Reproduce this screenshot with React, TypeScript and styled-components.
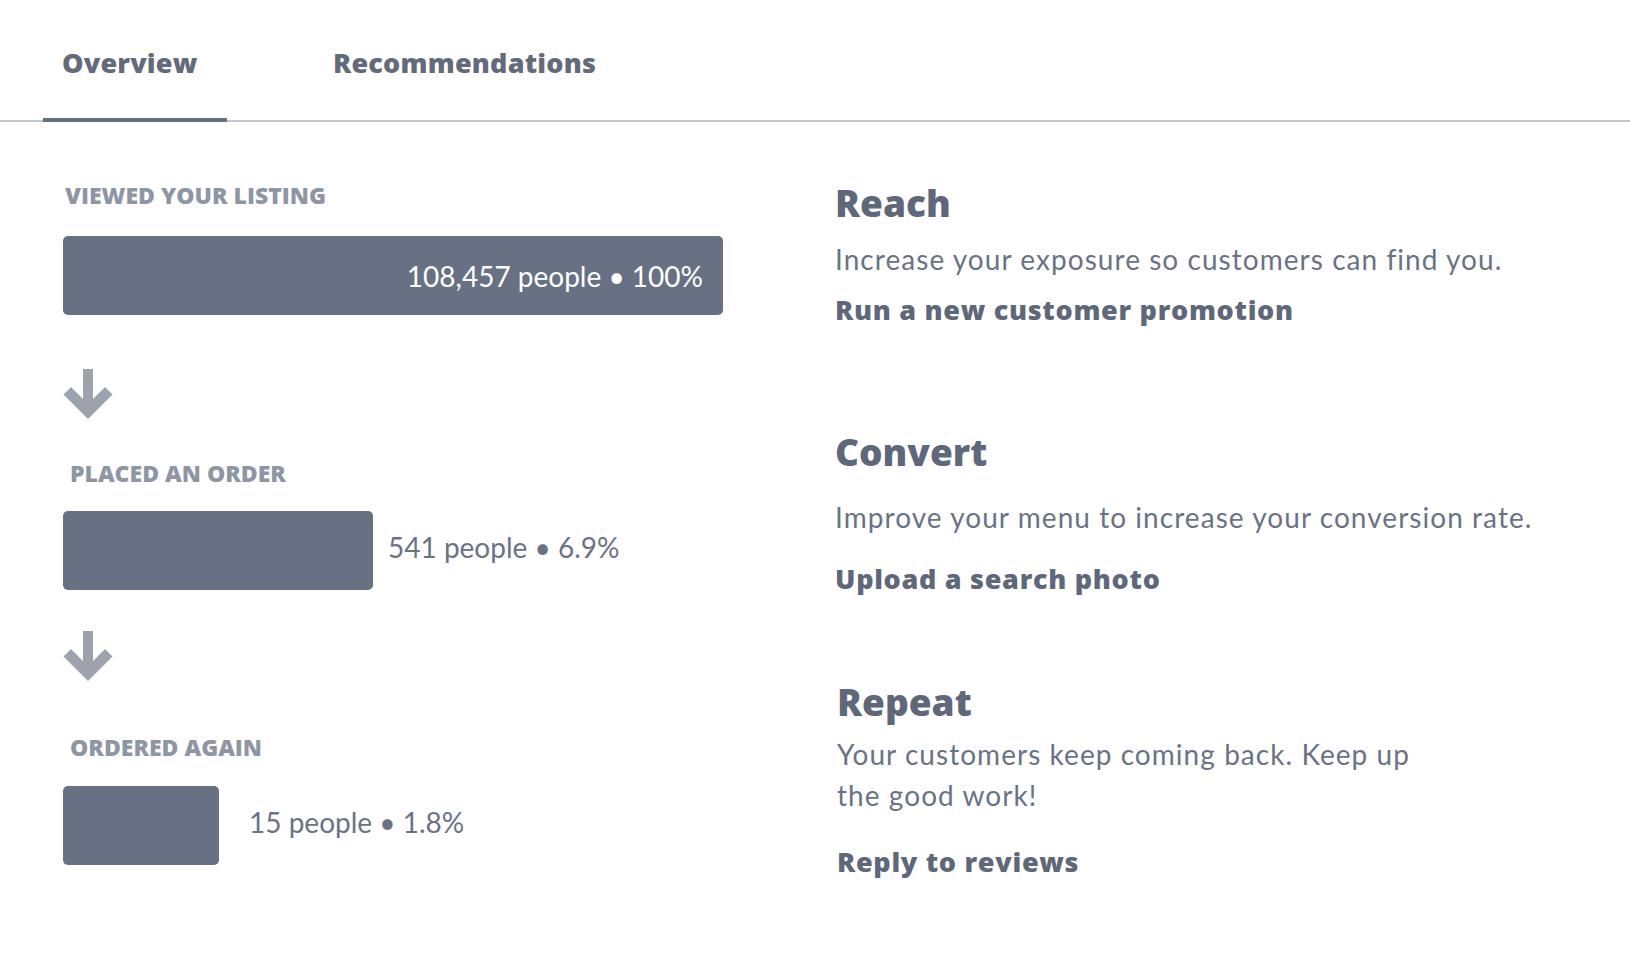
import React from "react";
import styled, { createGlobalStyle } from "styled-components";

const GlobalStyle = createGlobalStyle`
  html, body { margin: 0; padding: 0; background: #ffffff; }
  body { font-family: Lato, "Open Sans", sans-serif; -webkit-font-smoothing: antialiased; }
  * { box-sizing: border-box; }
`;

const heavy = `"Open Sans", Lato, sans-serif`;

const Page = styled.div`
  width: 1630px;
  min-height: 966px;
  background: #ffffff;
`;

const TabBar = styled.nav`
  display: flex;
  align-items: flex-end;
  gap: 87px;
  height: 122px;
  padding-left: 43px;
  border-bottom: 2px solid #c5c8cd;
`;

const Tab = styled.div<{ $active?: boolean }>`
  height: 122px;
  min-width: 184px;
  margin-bottom: -2px;
  padding: 42px 19px 0;
  font-family: ${heavy};
  font-size: 27px;
  line-height: 42px;
  font-weight: 800;
  letter-spacing: 0.2px;
  color: #636b7b;
  border-bottom: 4px solid ${(p) => (p.$active ? "#667083" : "transparent")};
`;

const Content = styled.main`
  display: grid;
  grid-template-columns: 772px 1fr;
  padding-left: 63px;
`;

const Funnel = styled.section`
  display: flex;
  flex-direction: column;
  padding-top: 60px;
`;

const Stage = styled.div<{ $top: number }>`
  display: flex;
  flex-direction: column;
  margin-top: ${(p) => p.$top}px;
`;

const StageLabel = styled.div<{ $indent: number; $gap: number }>`
  margin-left: ${(p) => p.$indent}px;
  margin-bottom: ${(p) => p.$gap}px;
  font-family: ${heavy};
  font-size: 23px;
  line-height: 26px;
  font-weight: 800;
  color: #8f96a3;
  text-transform: uppercase;
`;

const BarRow = styled.div<{ $gap: number }>`
  display: flex;
  align-items: center;
  gap: ${(p) => p.$gap}px;
`;

const Bar = styled.div`
  height: 79px;
  border-radius: 5px;
  background: #687183;
  display: flex;
  align-items: center;
  justify-content: flex-end;
  padding-right: 20px;
  flex-shrink: 0;
`;

const BarInside = styled.span`
  font-size: 28px;
  color: #ffffff;
  white-space: nowrap;
`;

const BarValue = styled.span`
  margin-bottom: 8px;
  font-size: 28px;
  color: #6a7386;
  white-space: nowrap;
`;

const ArrowBox = styled.div<{ $top: number }>`
  width: 50px;
  height: 50px;
  margin-top: ${(p) => p.$top}px;
  color: #9ca3ad;
  svg { display: block; }
`;

const Tips = styled.section`
  display: flex;
  flex-direction: column;
  padding-top: 58px;
`;

const Tip = styled.div<{ $top: number; $indent?: number }>`
  display: flex;
  flex-direction: column;
  margin-top: ${(p) => p.$top}px;
  margin-left: ${(p) => p.$indent ?? 0}px;
`;

const TipTitle = styled.h2`
  margin: 0;
  font-family: ${heavy};
  font-size: 37px;
  line-height: 46px;
  font-weight: 800;
  color: #5f687a;
`;

const TipText = styled.p<{ $top: number }>`
  margin: ${(p) => p.$top}px 0 0;
  font-size: 28px;
  line-height: 41px;
  font-weight: 400;
  letter-spacing: 1.05px;
  color: #6a7386;
`;

const TipLink = styled.a<{ $top: number }>`
  display: block;
  margin-top: ${(p) => p.$top}px;
  font-family: ${heavy};
  font-size: 27px;
  line-height: 32px;
  font-weight: 800;
  letter-spacing: 0.7px;
  color: #5f687a;
  text-decoration: none;
  cursor: pointer;
`;

const DownArrow = () => (
  <svg width="50" height="50" viewBox="0 0 50 50" aria-hidden="true">
    <polygon
      fill="currentColor"
      points="20,0 30,0 30,30 42,18 49.5,25.5 25,50 0.5,25.5 8,18 20,30"
    />
  </svg>
);

export default function App() {
  return (
    <Page>
      <GlobalStyle />
      <TabBar>
        <Tab $active>Overview</Tab>
        <Tab>Recommendations</Tab>
      </TabBar>
      <Content>
        <Funnel>
          <Stage $top={0}>
            <StageLabel $indent={2} $gap={28}>Viewed your listing</StageLabel>
            <BarRow $gap={0}>
              <Bar style={{ width: 660 }}>
                <BarInside>108,457 people • 100%</BarInside>
              </Bar>
            </BarRow>
          </Stage>
          <ArrowBox $top={54}>
            <DownArrow />
          </ArrowBox>
          <Stage $top={41}>
            <StageLabel $indent={7} $gap={25}>Placed an order</StageLabel>
            <BarRow $gap={15}>
              <Bar style={{ width: 310 }} />
              <BarValue>541 people • 6.9%</BarValue>
            </BarRow>
          </Stage>
          <ArrowBox $top={41}>
            <DownArrow />
          </ArrowBox>
          <Stage $top={53}>
            <StageLabel $indent={7} $gap={26}>Ordered again</StageLabel>
            <BarRow $gap={30}>
              <Bar style={{ width: 156 }} />
              <BarValue>15 people • 1.8%</BarValue>
            </BarRow>
          </Stage>
        </Funnel>
        <Tips>
          <Tip $top={0}>
            <TipTitle>Reach</TipTitle>
            <TipText $top={13}>Increase your exposure so customers can find you.</TipText>
            <TipLink $top={14}>Run a new customer promotion</TipLink>
          </Tip>
          <Tip $top={103}>
            <TipTitle>Convert</TipTitle>
            <TipText $top={22}>Improve your menu to increase your conversion rate.</TipText>
            <TipLink $top={25}>Upload a search photo</TipLink>
          </Tip>
          <Tip $top={84} $indent={2}>
            <TipTitle>Repeat</TipTitle>
            <TipText $top={9}>
              Your customers keep coming back. Keep up
              <br />
              the good work!
            </TipText>
            <TipLink $top={30}>Reply to reviews</TipLink>
          </Tip>
        </Tips>
      </Content>
    </Page>
  );
}
